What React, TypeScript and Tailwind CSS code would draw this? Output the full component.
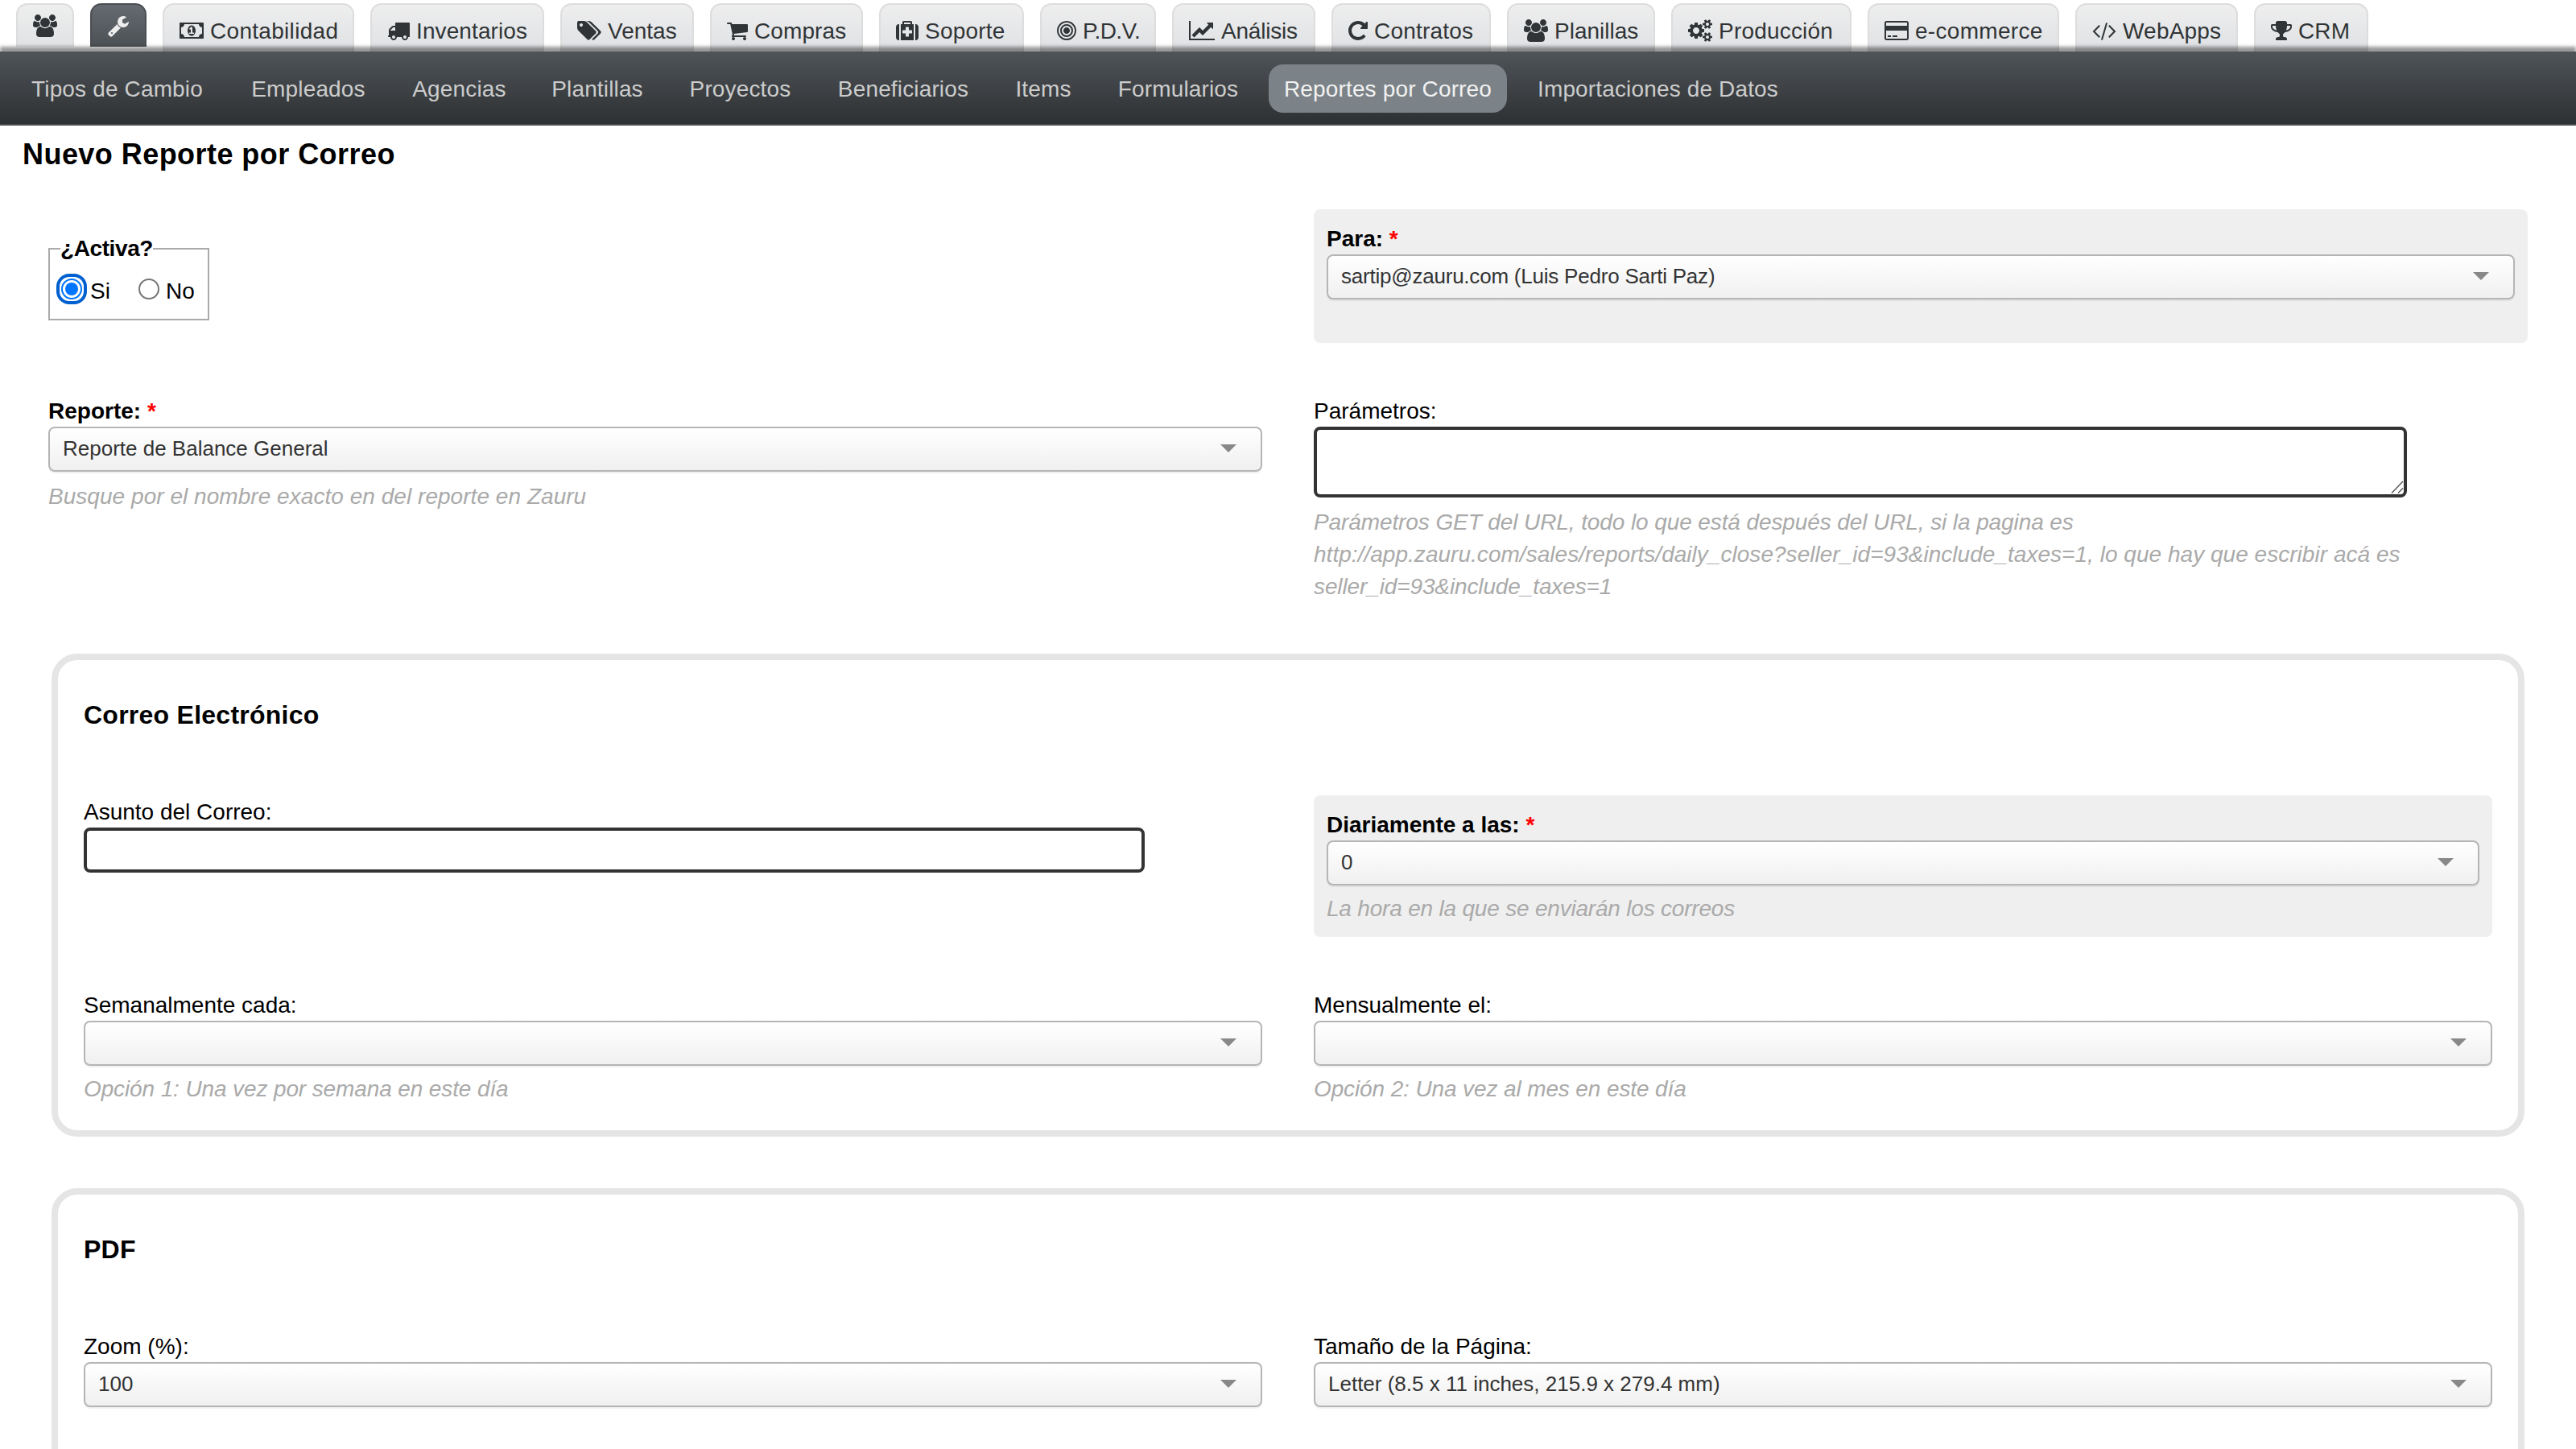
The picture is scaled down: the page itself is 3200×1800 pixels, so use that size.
import type { ReactNode } from "react";

interface Glyph {
  viewBox: string;
  width: string;
  d: string;
}

const icons: Record<string, Glyph> = {
  users: {
    viewBox: "0 0 1920 1792",
    width: "w-[30px]",
    d: "M593 896q-162 5-265 128h-134q-82 0-138-40.500t-56-118.500q0-353 124-353 6 0 43.500 21t97.500 42.500 119 21.500q67 0 133-23-5 37-5 66 0 139 81 256zM1664 1533q0 120-73 189.500t-194 69.500h-874q-121 0-194-69.500t-73-189.500q0-53 3.500-103.500t14-109 26.500-108.500 43-97.500 62-81 85.500-53.500 111.500-20q10 0 43 21.500t73 48 107 48 135 21.500 135-21.500 107-48 73-48 43-21.500q61 0 111.500 20t85.500 53.500 62 81 43 97.500 26.500 108.500 14 109 3.500 103.500zM640 256q0 106-75 181t-181 75-181-75-75-181 75-181 181-75 181 75 75 181zM1344 640q0 159-112.500 271.500t-271.500 112.500-271.500-112.500-112.500-271.500 112.500-271.500 271.500-112.500 271.500 112.500 112.500 271.500zM1920 865q0 78-56 118.500t-138 40.500h-134q-103-123-265-128 81-117 81-256 0-29-5-66 66 23 133 23 59 0 119-21.500t97.500-42.500 43.500-21q124 0 124 353zM1792 256q0 106-75 181t-181 75-181-75-75-181 75-181 181-75 181 75 75 181z",
  },
  wrench: {
    viewBox: "64 0 1664 1792",
    width: "w-[26px]",
    d: "M448 1472q0-26-19-45t-45-19-45 19-19 45 19 45 45 19 45-19 19-45zm644-420l-682 682q-37 37-90 37-52 0-91-37l-106-108q-38-36-38-90 0-53 38-91l681-681q39 98 114.500 173.500t173.500 114.500zm634-435q0 39-23 106-47 134-164.500 217.500t-258.500 83.500q-185 0-316.500-131.500t-131.500-316.500 131.500-316.500 316.500-131.500q58 0 121.500 16.500t107.500 46.500q16 11 16 28t-16 28l-293 169v224l193 107q5-3 79-48.500t135.500-81 70.500-35.500q15 0 23.500 10t8.500 25z",
  },
  money: {
    viewBox: "0 0 1920 1792",
    width: "w-[30px]",
    d: "M768 1152h384v-96h-128v-448h-114l-148 137 77 80q42-37 55-57h2v288h-128v96zm512-256q0 70-21 142t-59.500 134-101.500 101-138 39-138-39-101.500-101-59.500-134-21-142 21-142 59.500-134 101.500-101 138-39 138 39 101.500 101 59.500 134 21 142zm512 256v-512q-106 0-181-75t-75-181h-1152q0 106-75 181t-181 75v512q106 0 181 75t75 181h1152q0-106 75-181t181-75zm128-832v1152q0 26-19 45t-45 19h-1792q-26 0-45-19t-19-45v-1152q0-26 19-45t45-19h1792q26 0 45 19t19 45z",
  },
  truck: {
    viewBox: "0 0 1792 1792",
    width: "w-[28px]",
    d: "M640 1408q0-52-38-90t-90-38-90 38-38 90 38 90 90 38 90-38 38-90zm-384-512h384v-256h-158q-13 0-22 9l-195 195q-9 9-9 22v30zm1280 512q0-52-38-90t-90-38-90 38-38 90 38 90 90 38 90-38 38-90zm256-1088v1024q0 15-4 26.500t-13.500 18.500-16.500 11.500-23.500 6-22.500 2-25.500 0-22.500-.500q0 106-75 181t-181 75-181-75-75-181h-384q0 106-75 181t-181 75-181-75-75-181h-64q-3 0-22.500.500t-25.500 0-22.500-2-23.500-6-16.500-11.500-13.500-18.500-4-26.500q0-26 19-45t45-19v-320q0-8-.500-35t0-38 2.500-34.500 6.500-37 14-30.500 22.500-30l198-198q19-19 50.500-32t58.500-13h160v-192q0-26 19-45t45-19h1024q26 0 45 19t19 45z",
  },
  tags: {
    viewBox: "0 0 1920 1792",
    width: "w-[30px]",
    d: "M448 448q0-53-37.500-90.500t-90.500-37.500-90.500 37.500-37.500 90.500 37.500 90.500 90.500 37.500 90.500-37.500 37.500-90.500zm1067 576q0 53-37 90l-491 492q-39 37-91 37-53 0-90-37l-715-716q-38-37-64.500-101t-26.500-117v-416q0-52 38-90t90-38h416q53 0 117 26.500t102 64.500l715 714q37 39 37 91zm384 0q0 53-37 90l-491 492q-39 37-91 37-36 0-59-14t-53-45l470-470q37-37 37-90 0-52-37-91l-715-714q-38-38-102-64.500t-117-26.500h224q53 0 117 26.500t102 64.500l715 714q37 39 37 91z",
  },
  cart: {
    viewBox: "64 0 1664 1792",
    width: "w-[26px]",
    d: "M704 1536q0 52-38 90t-90 38-90-38-38-90 38-90 90-38 90 38 38 90zm896 0q0 52-38 90t-90 38-90-38-38-90 38-90 90-38 90 38 38 90zm128-1088v512q0 24-16.500 42.500t-40.500 21.500l-1044 122q13 60 13 70 0 16-24 64h920q26 0 45 19t19 45-19 45-45 19h-1024q-26 0-45-19t-19-45q0-11 8-31.500t16-36 21.500-40 15.500-29.500l-177-823h-204q-26 0-45-19t-19-45 19-45 45-19h256q16 0 28.500 6.500t19.500 15.500 13 24.500 8 26 5.500 29.500 4.500 26h1201q26 0 45 19t19 45z",
  },
  medkit: {
    viewBox: "0 0 1792 1792",
    width: "w-[28px]",
    d: "M1280 1088v-192q0-14-9-23t-23-9h-224v-224q0-14-9-23t-23-9h-192q-14 0-23 9t-9 23v224h-224q-14 0-23 9t-9 23v192q0 14 9 23t23 9h224v224q0 14 9 23t23 9h192q14 0 23-9t9-23v-224h224q14 0 23-9t9-23zm-640-704h512v-128h-512v128zm-384 0v1280h-32q-92 0-158-66t-66-158v-832q0-92 66-158t158-66h32zm1152 0v1280h-1024v-1280h128v-160q0-40 28-68t68-28h576q40 0 68 28t28 68v160h128zm384 224v832q0 92-66 158t-158 66h-32v-1280h32q92 0 158 66t66 158z",
  },
  bullseye: {
    viewBox: "128 0 1536 1792",
    width: "w-[24px]",
    d: "M1152 896q0 106-75 181t-181 75-181-75-75-181 75-181 181-75 181 75 75 181zm128 0q0-159-112.500-271.500t-271.500-112.500-271.500 112.500-112.500 271.500 112.500 271.500 271.500 112.500 271.500-112.500 112.500-271.500zm128 0q0 212-150 362t-362 150-362-150-150-362 150-362 362-150 362 150 150 362zm128 0q0-130-51-248.500t-136.500-204-204-136.500-248.500-51-248.500 51-204 136.500-136.500 204-51 248.500 51 248.500 136.500 204 204 136.500 248.500 51 248.500-51 204-136.500 136.500-204 51-248.500zm128 0q0 209-103 385.500t-279.500 279.500-385.500 103-385.500-103-279.500-279.500-103-385.500 103-385.500 279.500-279.500 385.500-103 385.500 103 279.500 279.500 103 385.500z",
  },
  chart: {
    viewBox: "0 0 2048 1792",
    width: "w-[32px]",
    d: "M2048 1536v128h-2048v-1536h128v1408h1920zm-128-1248v435q0 21-19.500 29.500t-35.500-7.500l-121-121-633 633q-10 10-23 10t-23-10l-233-233-416 416-192-192 585-585q10-10 23-10t23 10l233 233 464-464-121-121q-16-16-7.500-35.500t29.500-19.500h435q14 0 23 9t9 23z",
  },
  repeat: {
    viewBox: "128 0 1536 1792",
    width: "w-[24px]",
    d: "M1664 256v448q0 26-19 45t-45 19h-448q-42 0-59-40-17-39 14-69l138-138q-148-137-349-137-104 0-198.500 40.500t-163.500 109.500-109.500 163.500-40.500 198.500 40.500 198.500 109.500 163.500 163.500 109.500 198.500 40.500q119 0 225-52t179-147q7-10 23-12 15 0 25 9l137 138q9 8 9.500 20.500t-7.500 22.500q-109 132-264 204.500t-327 72.500q-156 0-298-61t-245-164-164-245-61-298 61-298 164-245 245-164 298-61q147 0 284.500 55.500t244.500 156.500l130-129q29-31 70-14 39 17 39 59z",
  },
  cogs: {
    viewBox: "0 0 1920 1792",
    width: "w-[30px]",
    d: "M896 896q0-106-75-181t-181-75-181 75-75 181 75 181 181 75 181-75 75-181zm768 512q0-52-38-90t-90-38-90 38-38 90q0 53 37.500 90.500t90.500 37.500 90.500-37.500 37.500-90.500zm0-1024q0-52-38-90t-90-38-90 38-38 90q0 53 37.500 90.500t90.500 37.500 90.500-37.500 37.500-90.500zm-384 421v185q0 10-7 19.500t-16 10.500l-155 24q-11 35-32 76 34 48 90 115 7 11 7 20 0 12-7 19-23 30-82.500 89.500t-78.500 59.500q-11 0-21-7l-115-90q-37 19-77 31-11 108-23 155-7 24-30 24h-186q-11 0-20-7.500t-10-17.500l-23-153q-34-10-75-31l-118 89q-7 7-20 7-11 0-21-8-144-133-144-160 0-9 7-19 10-14 41-53t47-61q-23-44-35-82l-152-24q-10-1-17-9.500t-7-19.500v-185q0-10 7-19.500t16-10.500l155-24q11-35 32-76-34-48-90-115-7-11-7-20 0-12 7-20 22-30 82-89t79-59q11 0 21 7l115 90q34-18 77-32 11-108 23-154 7-24 30-24h186q11 0 20 7.500t10 17.500l23 153q34 10 75 31l118-89q8-7 20-7 11 0 21 8 144 133 144 160 0 8-7 19-12 16-42 54t-45 60q23 48 34 82l152 23q10 2 17 10.500t7 19.500zm640 533v140q0 16-149 31-12 27-30 52 51 113 51 138 0 4-4 7-122 71-124 71-8 0-46-47t-52-68q-20 2-30 2t-30-2q-14 21-52 68t-46 47q-2 0-124-71-4-3-4-7 0-25 51-138-18-25-30-52-149-15-149-31v-140q0-16 149-31 13-29 30-52-51-113-51-138 0-4 4-7 4-2 35-20t59-34 30-16q8 0 46 46.500t52 67.500q20-2 30-2t30 2q51-71 92-112l6-2q4 0 124 70 4 3 4 7 0 25-51 138 17 23 30 52 149 15 149 31zm0-1024v140q0 16-149 31-12 27-30 52 51 113 51 138 0 4-4 7-122 71-124 71-8 0-46-47t-52-68q-20 2-30 2t-30-2q-14 21-52 68t-46 47q-2 0-124-71-4-3-4-7 0-25 51-138-18-25-30-52-149-15-149-31v-140q0-16 149-31 13-29 30-52-51-113-51-138 0-4 4-7 4-2 35-20t59-34 30-16q8 0 46 46.500t52 67.500q20-2 30-2t30 2q51-71 92-112l6-2q4 0 124 70 4 3 4 7 0 25-51 138 17 23 30 52 149 15 149 31z",
  },
  card: {
    viewBox: "0 0 1920 1792",
    width: "w-[30px]",
    d: "M1760 128q66 0 113 47t47 113v1216q0 66-47 113t-113 47h-1600q-66 0-113-47t-47-113v-1216q0-66 47-113t113-47h1600zm-1600 128q-13 0-22.500 9.500t-9.500 22.500v224h1664v-224q0-13-9.500-22.500t-22.500-9.500h-1600zm1600 1280q13 0 22.500-9.500t9.500-22.500v-608h-1664v608q0 13 9.500 22.500t22.500 9.500h1600zm-1504-128v-128h256v128h-256zm384 0v-128h384v128h-384z",
  },
  code: {
    viewBox: "0 0 1920 1792",
    width: "w-[30px]",
    d: "M617 1399l-50 50q-10 10-23 10t-23-10l-466-466q-10-10-10-23t10-23l466-466q10-10 23-10t23 10l50 50q10 10 10 23t-10 23l-393 393 393 393q10 10 10 23t-10 23zm591-1067l-373 1291q-4 13-15.500 19.500t-23.500 2.500l-62-17q-13-4-19.500-15.500t-2.500-24.500l373-1291q4-13 15.500-19.500t23.500-2.500l62 17q13 4 19.500 15.500t2.500 24.500zm657 651l-466 466q-10 10-23 10t-23-10l-50-50q-10-10-10-23t10-23l393-393-393-393q-10-10-10-23t10-23l50-50q10-10 23-10t23 10l466 466q10 10 10 23t-10 23z",
  },
  trophy: {
    viewBox: "64 0 1664 1792",
    width: "w-[26px]",
    d: "M522 883q-74-162-74-371h-256v96q0 78 94.500 162t235.500 113zm1078-275v-96h-256q0 209-74 371 141-29 235.500-113t94.500-162zm128-128v128q0 71-41.500 143t-112 130-173 97.500-215.500 44.500q-42 54-95 95-38 34-52.500 72.500t-14.500 89.500q0 54 30.500 91t97.500 37q75 0 133.500 45.500t58.500 114.500v64q0 14-9 23t-23 9h-832q-14 0-23-9t-9-23v-64q0-69 58.500-114.500t133.500-45.500q67 0 97.500-37t30.500-91q0-51-14.500-89.500t-52.500-72.500q-53-41-95-95-113-5-215.500-44.500t-173-97.500-112-130-41.500-143v-128q0-40 28-68t68-28h288v-96q0-66 47-113t113-47h576q66 0 113 47t47 113v96h288q40 0 68 28t28 68z",
  },
};

const tabs = [
  { label: "Contabilidad", icon: "money", width: "w-[238px] tracking-[0.3px]" },
  { label: "Inventarios", icon: "truck", width: "w-[216px] tracking-[0.1px]" },
  { label: "Ventas", icon: "tags", width: "w-[166px]" },
  { label: "Compras", icon: "cart", width: "w-[190px] tracking-[0.1px]" },
  { label: "Soporte", icon: "medkit", width: "w-[180px] tracking-[0.2px]" },
  { label: "P.D.V.", icon: "bullseye", width: "w-[144px] tracking-[-0.6px]" },
  { label: "Análisis", icon: "chart", width: "w-[178px] tracking-[-0.2px]" },
  { label: "Contratos", icon: "repeat", width: "w-[198px] tracking-[0.2px]" },
  { label: "Planillas", icon: "users", width: "w-[184px]" },
  { label: "Producción", icon: "cogs", width: "w-[224px] tracking-[0.2px]" },
  { label: "e-commerce", icon: "card", width: "w-[238px] tracking-[0.3px]" },
  { label: "WebApps", icon: "code", width: "w-[202px] tracking-[0.2px]" },
  { label: "CRM", icon: "trophy", width: "w-[142px] tracking-[0.1px]" },
];

const navLinks = [
  { label: "Tipos de Cambio", width: "w-[255px]" },
  { label: "Empleados", width: "w-[184px]" },
  { label: "Agencias", width: "w-[155px]" },
  { label: "Plantillas", width: "w-[152px]" },
  { label: "Proyectos", width: "w-[167px]" },
  { label: "Beneficiarios", width: "w-[202px]" },
  { label: "Items", width: "w-[110px]" },
  { label: "Formularios", width: "w-[189px]" },
  { label: "Reportes por Correo", width: "w-[296px]", active: true },
  { label: "Importaciones de Datos", width: "w-[339px]" },
];

function Icon({ name }: { name: string }) {
  const { viewBox, width, d } = icons[name];
  return (
    <svg viewBox={viewBox} className={`h-[28px] shrink-0 ${width}`} fill="currentColor">
      <path d={d} />
    </svg>
  );
}

function Label({ children, required }: { children: ReactNode; required?: boolean }) {
  return (
    <label className={`block h-10 pt-px leading-10 ${required ? "font-bold" : ""}`}>
      {children}
      {required && <span className="text-[#ff0000]"> *</span>}
    </label>
  );
}

function Hint({ children, className = "mt-[9px] tracking-[-0.12px]" }: { children: ReactNode; className?: string }) {
  return <p className={`leading-10 text-[#aaaaaa] italic ${className}`}>{children}</p>;
}

function Select({ value, className = "" }: { value?: string; className?: string }) {
  return (
    <div
      className={`flex h-14 items-start justify-between rounded-[8px] border-2 border-[#b5b5b5] bg-linear-to-b from-white to-[#f0f0f0] pr-[30px] pl-4 text-[26px] text-[#333333] shadow-[0_2px_1px_rgba(0,0,0,0.06)] ${className}`}
    >
      <span className="pt-[9px] leading-8">{value}</span>
      <svg viewBox="0 0 20 10" className="mt-5 h-[10px] w-[20px]" fill="#888888">
        <path d="M0 0h20L10 10z" />
      </svg>
    </div>
  );
}

function Highlight({ children, className }: { children: ReactNode; className: string }) {
  return <div className={`rounded-[8px] bg-[#efefef] p-4 ${className}`}>{children}</div>;
}

function Section({ title, children }: { title: string; children: ReactNode }) {
  return (
    <section className="mx-16 mb-16 rounded-[32px] border-8 border-[#e5e5e5] px-8 pt-12 pb-[31px]">
      <h3 className="text-[32px] leading-10 font-bold tracking-[0.25px]">{title}</h3>
      <div className="mt-20 grid grid-cols-2 gap-16">{children}</div>
    </section>
  );
}

export default function App() {
  return (
    <div className="h-[1800px] w-[3200px] overflow-hidden bg-white font-['Liberation_Sans',Arial,sans-serif] text-[28px] text-black">
      {/* Module tabs */}
      <header className="flex h-16 gap-5 pt-1 pl-5 text-[#303436]">
        <div className="flex h-[54px] w-[72px] justify-center rounded-t-[14px] border-2 border-b-0 border-[#dddddd] bg-linear-to-b from-[#eeeeee] to-[#e0e2e4] pt-3">
          <Icon name="users" />
        </div>
        <div className="flex h-[54px] w-[70px] justify-center rounded-t-[14px] border-2 border-b-0 border-[#4b4f54] bg-linear-to-b from-[#656b70] to-[#4c5156] pt-3 text-[#eeeeee]">
          <Icon name="wrench" />
        </div>
        {tabs.map((tab) => (
          <div
            key={tab.label}
            className={`flex h-[60px] gap-2 rounded-t-[14px] border-2 border-b-0 border-[#dddddd] bg-linear-to-b from-[#eeeeee] to-[#dfe1e4] pt-[18px] pl-[19px] whitespace-nowrap ${tab.width}`}
          >
            <Icon name={tab.icon} />
            <span className="-mt-px leading-8">{tab.label}</span>
          </div>
        ))}
      </header>

      {/* Section nav */}
      <nav className="relative flex h-[92px] gap-[18px] border-b-2 border-[#4b4e53] bg-linear-to-b from-[#4f5459] to-[#2e3133] pt-4 pl-[18px] text-[#cccccc] shadow-[0_-6px_4px_rgba(0,0,0,0.4)]">
        {navLinks.map((link) => (
          <a
            key={link.label}
            className={`h-[60px] rounded-[18px] text-center leading-[62px] tracking-[0.15px] whitespace-nowrap ${link.width} ${link.active ? "bg-[#7c8388] text-[#f2f2f2]" : ""}`}
          >
            {link.label}
          </a>
        ))}
      </nav>

      <h2 className="mt-3 ml-7 text-[36px] leading-[48px] font-bold tracking-[0.45px]">
        Nuevo Reporte por Correo
      </h2>

      <div className="mt-11 grid grid-cols-2 gap-x-16 px-[60px]">
        <div>
          <fieldset className="mt-[33px] h-[105px] w-[200px] border-2 border-[#aaaaaa] pl-2">
            <legend className="ml-[5px] w-[115px] leading-8 font-bold tracking-[-0.4px]">¿Activa?</legend>
            <div className="flex pt-[15px]">
              <span className="flex h-[38px] w-[38px] items-center justify-center rounded-[16px] border-4 border-[#0060d0]">
                <span className="flex h-[26px] w-[26px] shrink-0 items-center justify-center rounded-full border-2 border-[#0075ff]">
                  <span className="h-4 w-4 rounded-full bg-[#0075ff]" />
                </span>
              </span>
              <span className="ml-1 w-[60px] pt-[6px] leading-8">Si</span>
              <span className="mt-[6px] h-[26px] w-[26px] rounded-full border-2 border-[#767676]" />
              <span className="ml-2 pt-[6px] leading-8">No</span>
            </div>
          </fieldset>
        </div>
        <Highlight className="h-[166px]">
          <Label required>Para:</Label>
          <Select value="sartip@zauru.com (Luis Pedro Sarti Paz)" className="tracking-[-0.22px]" />
        </Highlight>
      </div>

      <div className="mt-16 mb-[63px] grid grid-cols-2 gap-x-16 px-[60px]">
        <div>
          <Label required>Reporte:</Label>
          <Select value="Reporte de Balance General" />
          <Hint className="mt-[11px] tracking-[0.04px]">Busque por el nombre exacto en del reporte en Zauru</Hint>
        </div>
        <div className="w-[1358px]">
          <Label>Parámetros:</Label>
          <div className="relative">
            <textarea className="block h-[88px] w-full resize-none rounded-[8px] border-4 border-[#333333]" />
            <svg
              viewBox="0 0 16 16"
              className="absolute right-1 bottom-[5px] h-4 w-4"
              stroke="#555555"
              strokeWidth="1.4"
            >
              <path d="M1 15.500L15 1M9 15.500L15 9.500" />
            </svg>
          </div>
          <Hint className="mt-[11px]">
            <span className="block tracking-[-0.1px]">
              Parámetros GET del URL, todo lo que está después del URL, si la pagina es
            </span>
            <span className="block tracking-[0.03px]">
              http://app.zauru.com/sales/reports/daily_close?seller_id=93&amp;include_taxes=1, lo que hay que escribir acá es
            </span>
            <span className="block tracking-[-0.12px]">seller_id=93&amp;include_taxes=1</span>
          </Hint>
        </div>
      </div>

      <Section title="Correo Electrónico">
        <div>
          <Label>Asunto del Correo:</Label>
          <input className="block h-14 w-[1318px] rounded-[8px] border-4 border-[#333333]" />
        </div>
        <Highlight className="h-[176px]">
          <Label required>Diariamente a las:</Label>
          <Select value="0" />
          <Hint className="mt-[9px] tracking-[-0.2px]">La hora en la que se enviarán los correos</Hint>
        </Highlight>
        <div>
          <Label>Semanalmente cada:</Label>
          <Select />
          <Hint>Opción 1: Una vez por semana en este día</Hint>
        </div>
        <div>
          <Label>Mensualmente el:</Label>
          <Select />
          <Hint>Opción 2: Una vez al mes en este día</Hint>
        </div>
      </Section>

      <Section title="PDF">
        <div className="h-[240px]">
          <Label>Zoom (%):</Label>
          <Select value="100" />
        </div>
        <div>
          <Label>Tamaño de la Página:</Label>
          <Select value="Letter (8.5 x 11 inches, 215.9 x 279.4 mm)" />
        </div>
      </Section>
    </div>
  );
}
